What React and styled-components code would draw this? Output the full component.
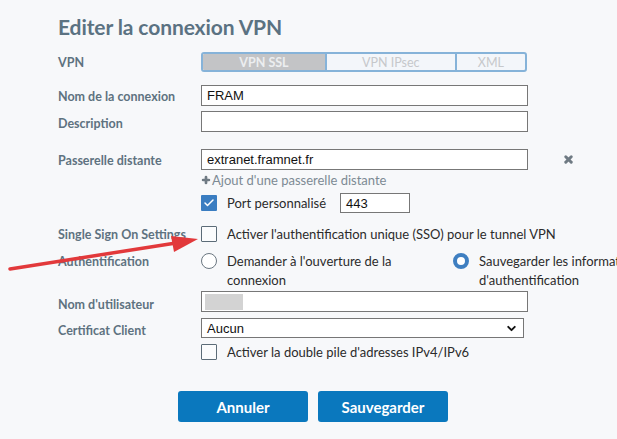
import React from 'react';
import styled, { createGlobalStyle } from 'styled-components';
import { Check, X, Plus, ChevronDown } from 'lucide-react';

const GlobalStyle = createGlobalStyle`
  html, body {
    margin: 0;
    padding: 0;
    background: #f7f8fa;
  }
  body {
    font-family: Lato, "Open Sans", sans-serif;
    overflow: hidden;
  }
`;

const Page = styled.div`
  position: relative;
  width: 617px;
  height: 439px;
  overflow: hidden;
  padding: 14px 0 0 58px;
  box-sizing: border-box;
`;

const Title = styled.h1`
  margin: 0 0 12px 0;
  font-size: 21px;
  font-weight: 700;
  color: #5b7282;
  line-height: 26px;
  letter-spacing: -0.1px;
`;

const Row = styled.div`
  display: grid;
  grid-template-columns: 143px 1fr;
  align-items: ${(p) => p.$align || 'center'};
  margin-top: ${(p) => p.$top || 0}px;
  min-height: ${(p) => p.$h || 20}px;
`;

const Label = styled.div`
  font-size: 12.5px;
  font-weight: 700;
  color: #5e7280;
  padding-top: ${(p) => p.$pt || 0}px;
`;

const Segmented = styled.div`
  display: flex;
  width: 322px;
  height: 16px;
  border: 2px solid #86b3d9;
  border-radius: 3px;
  overflow: hidden;
  background: #f3f6fa;
`;

const Segment = styled.div`
  width: ${(p) => p.$w}px;
  display: flex;
  align-items: center;
  justify-content: center;
  font-size: 12.5px;
  font-weight: ${(p) => (p.$active ? 700 : 400)};
  color: ${(p) => (p.$active ? '#eceef0' : '#c6c8cb')};
  background: ${(p) => (p.$active ? '#c3c4c6' : 'transparent')};
  border-left: ${(p) => (p.$first ? 'none' : '2px solid #86b3d9')};
`;

const TextBox = styled.div`
  width: ${(p) => p.$w || 327}px;
  height: 21px;
  box-sizing: border-box;
  border: 1px solid #777;
  background: #fff;
  display: flex;
  align-items: center;
  padding-left: 5px;
  font-family: "Liberation Sans", Arial, sans-serif;
  font-size: 13px;
  color: #111;
`;

const FieldLine = styled.div`
  display: flex;
  align-items: center;
`;

const RemoveIcon = styled.span`
  display: flex;
  margin-left: 35px;
  color: #6f7a83;
`;

const AddLink = styled.div`
  display: flex;
  align-items: center;
  gap: 1px;
  font-size: 13px;
  color: #7d8a94;
  svg {
    color: #6f7a83;
  }
`;

const CheckLine = styled.label`
  display: flex;
  align-items: center;
  font-size: 13px;
  color: #2b2b2b;
`;

const Box = styled.span`
  display: inline-flex;
  align-items: center;
  justify-content: center;
  width: 16px;
  height: 16px;
  box-sizing: border-box;
  margin-right: 10px;
  border-radius: 1px;
  background: ${(p) => (p.$checked ? '#3a7dc1' : '#fbfcfd')};
  border: ${(p) => (p.$checked ? 'none' : '1.5px solid #5c6c78')};
  color: #fff;
`;

const PortBox = styled(TextBox)`
  margin-left: 14px;
  height: 20px;
`;

const Options = styled.div`
  display: grid;
  grid-template-columns: 252px 252px;
`;

const Option = styled.label`
  display: flex;
  align-items: flex-start;
  font-size: 13px;
  line-height: 19px;
  color: #2b2b2b;
`;

const Radio = styled.span`
  flex: none;
  width: 16px;
  height: 16px;
  box-sizing: border-box;
  border-radius: 50%;
  margin: 1px 10px 0 0;
  background: #fff;
  border: ${(p) => (p.$checked ? '4px solid #3f7fc1' : '1px solid #6b7781')};
`;

const OptionText = styled.span`
  width: ${(p) => p.$w}px;
`;

const Redacted = styled.span`
  display: block;
  width: 38px;
  height: 16px;
  margin-left: -2px;
  background: #d3d3d3;
  filter: blur(0.6px);
`;

const SelectBox = styled(TextBox)`
  width: 323px;
  height: 20px;
  justify-content: space-between;
  padding-right: 5px;
  border-color: #767676;
  svg {
    color: #111;
  }
`;

const Actions = styled.div`
  display: flex;
  gap: 10px;
  margin: 31px 0 0 120px;
`;

const Button = styled.button`
  width: 130px;
  height: 31px;
  border: none;
  border-radius: 3px;
  background: #0a78be;
  color: #fff;
  font-family: Lato, sans-serif;
  font-weight: 700;
  font-size: 15px;
  cursor: pointer;
`;

const Arrow = styled.svg`
  position: absolute;
  left: 0;
  top: 0;
  pointer-events: none;
`;

export default function App() {
  return (
    <>
      <GlobalStyle />
      <Page>
        <Title>Editer la connexion VPN</Title>

        <Row $h={20}>
          <Label>VPN</Label>
          <Segmented>
            <Segment $w={125} $active $first>VPN SSL</Segment>
            <Segment $w={131}>VPN IPsec</Segment>
            <Segment $w={70}>XML</Segment>
          </Segmented>
        </Row>

        <Row $top={13} $h={21}>
          <Label $pt={2}>Nom de la connexion</Label>
          <TextBox>FRAM</TextBox>
        </Row>

        <Row $top={5} $h={21}>
          <Label $pt={4}>Description</Label>
          <TextBox />
        </Row>

        <Row $top={17} $h={21}>
          <Label $pt={1}>Passerelle distante</Label>
          <FieldLine>
            <TextBox>extranet.framnet.fr</TextBox>
            <RemoveIcon>
              <X size={11} strokeWidth={6.5} />
            </RemoveIcon>
          </FieldLine>
        </Row>

        <Row $top={1} $h={18}>
          <span />
          <AddLink>
            <Plus size={10} strokeWidth={6.5} />
            Ajout d'une passerelle distante
          </AddLink>
        </Row>

        <Row $top={4} $h={20}>
          <span />
          <FieldLine>
            <CheckLine>
              <Box $checked>
                <Check size={12} strokeWidth={3} />
              </Box>
              Port personnalisé
            </CheckLine>
            <PortBox $w={70}>443</PortBox>
          </FieldLine>
        </Row>

        <Row $top={12} $h={18}>
          <Label>Single Sign On Settings</Label>
          <CheckLine>
            <Box />
            Activer l'authentification unique (SSO) pour le tunnel VPN
          </CheckLine>
        </Row>

        <Row $top={9} $h={38} $align="start">
          <Label $pt={2}>Authentification</Label>
          <Options>
            <Option>
              <Radio />
              <OptionText $w={180}>Demander à l'ouverture de la connexion</OptionText>
            </Option>
            <Option>
              <Radio $checked />
              <OptionText $w={200}>Sauvegarder les informations d'authentification</OptionText>
            </Option>
          </Options>
        </Row>

        <Row $top={1} $h={20}>
          <Label $pt={6}>Nom d'utilisateur</Label>
          <TextBox $w={327}>
            <Redacted />
          </TextBox>
        </Row>

        <Row $top={6} $h={20}>
          <Label $pt={4}>Certificat Client</Label>
          <SelectBox>
            Aucun
            <ChevronDown size={13} strokeWidth={3.5} />
          </SelectBox>
        </Row>

        <Row $top={6} $h={16}>
          <span />
          <CheckLine>
            <Box />
            Activer la double pile d'adresses IPv4/IPv6
          </CheckLine>
        </Row>

        <Actions>
          <Button>Annuler</Button>
          <Button>Sauvegarder</Button>
        </Actions>

        <Arrow width="617" height="439" viewBox="0 0 617 439">
          <line x1="10" y1="269" x2="176" y2="243" stroke="#e2393b" strokeWidth="3.5" strokeLinecap="round" />
          <polygon points="198,239 171,236 174,252" fill="#e2393b" />
        </Arrow>
      </Page>
    </>
  );
}
